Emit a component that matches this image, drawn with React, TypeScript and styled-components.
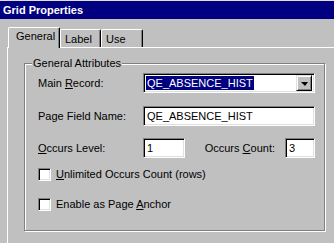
import { FunctionComponent, ReactNode } from "react";
import styled, { createGlobalStyle } from "styled-components";

const GlobalStyle = createGlobalStyle`
  html, body {
    margin: 0;
    padding: 0;
    background: #c0c0c0;
  }
  body {
    font-family: "Liberation Sans", Arial, sans-serif;
    font-size: 11px;
    color: #000;
  }
`;

const Window = styled.div`
  width: 334px;
  height: 243px;
  display: flex;
  flex-direction: column;
  background: #c0c0c0;
  border-top: 1px solid #dfdfdf;
  box-sizing: border-box;
  overflow: hidden;
`;

const TitleBar = styled.div`
  height: 18px;
  line-height: 18px;
  padding-left: 3px;
  background: #000080;
  color: #fff;
  font-weight: bold;
  font-size: 11px;
`;

const TabStrip = styled.div`
  display: flex;
  align-items: flex-end;
  margin: 8px 0 0 8px;
  position: relative;
  z-index: 1;
`;

const Tab = styled.div<{ $active?: boolean; $width: number }>`
  box-sizing: border-box;
  width: ${({ $width }) => $width}px;
  height: ${({ $active }) => ($active ? 21 : 18)}px;
  margin-bottom: ${({ $active }) => ($active ? -1 : 0)}px;
  padding: ${({ $active }) => ($active ? "2px 0 0 7px" : "3px 0 0 4px")};
  background: #c0c0c0;
  border-top: 1px solid #fff;
  border-left: 1px solid #fff;
  border-right: 1px solid #000;
  border-radius: 2px 2px 0 0;
  box-shadow: inset -1px 0 #808080;
  line-height: 13px;
`;

const Panel = styled.div`
  flex: 1;
  margin-left: 7px;
  border-top: 1px solid #fff;
  border-left: 1px solid #fff;
  padding: 15px 0 0 16px;
`;

const GroupBox = styled.div`
  box-sizing: border-box;
  width: 301px;
  height: 168px;
  display: flex;
  flex-direction: column;
  padding-left: 13px;
  border: 1px solid #808080;
  box-shadow: inset 1px 1px #fff, 1px 1px #fff;
`;

const Legend = styled.div`
  align-self: flex-start;
  margin: -7px 0 0 -6px;
  padding: 0 1px;
  line-height: 13px;
  background: #c0c0c0;
`;

const Row = styled.div<{ $gap: number }>`
  width: 277px;
  display: flex;
  align-items: center;
  margin-top: ${({ $gap }) => $gap}px;
`;

const Label = styled.span<{ $width?: number }>`
  width: ${({ $width }) => ($width ? `${$width}px` : "auto")};
  line-height: 13px;
  white-space: nowrap;
`;

const PushedLabel = styled(Label)`
  margin: 0 10px 0 auto;
`;

const Sunken = styled.div<{ $width: number }>`
  box-sizing: border-box;
  width: ${({ $width }) => $width}px;
  height: 20px;
  display: flex;
  align-items: center;
  padding: 0 2px 0 3px;
  background: #fff;
  border-top: 1px solid #808080;
  border-left: 1px solid #808080;
  border-bottom: 1px solid #fff;
  border-right: 1px solid #fff;
  box-shadow: inset 1px 1px #000, inset -1px -1px #dfdfdf;
  line-height: 13px;
  white-space: nowrap;
`;

const SelectBox = styled(Sunken)`
  padding: 0 2px 0 2px;
  justify-content: space-between;
`;

const Selected = styled.span`
  background: #000080;
  color: #fff;
  line-height: 14px;
  padding: 0 1px;
`;

const DropButton = styled.div`
  box-sizing: border-box;
  width: 16px;
  height: 16px;
  display: flex;
  align-items: center;
  justify-content: center;
  background: #c0c0c0;
  border-top: 1px solid #dfdfdf;
  border-left: 1px solid #dfdfdf;
  border-right: 1px solid #000;
  border-bottom: 1px solid #000;
  box-shadow: inset 1px 1px #fff, inset -1px -1px #808080;
`;

const Arrow = styled.div`
  width: 0;
  height: 0;
  border-left: 4px solid transparent;
  border-right: 3px solid transparent;
  border-top: 4px solid #000;
  margin-top: 1px;
`;

const CheckBox = styled.div`
  box-sizing: border-box;
  width: 13px;
  height: 13px;
  background: #fff;
  border-top: 1px solid #808080;
  border-left: 1px solid #808080;
  border-bottom: 1px solid #fff;
  border-right: 1px solid #fff;
  box-shadow: inset 1px 1px #000, inset -1px -1px #dfdfdf;
`;

const CheckLabel = styled.span`
  margin-left: 5px;
  line-height: 13px;
`;

const U = styled.span`
  text-decoration: underline;
  text-underline-offset: 1px;
`;

const CheckRow: FunctionComponent<{ gap: number; children: ReactNode }> = ({
  gap,
  children,
}) => (
  <Row $gap={gap}>
    <CheckBox />
    <CheckLabel>{children}</CheckLabel>
  </Row>
);

const App: FunctionComponent = () => {
  return (
    <>
      <GlobalStyle />
      <Window>
        <TitleBar>Grid Properties</TitleBar>
        <TabStrip>
          <Tab $active $width={52}>General</Tab>
          <Tab $width={41}>Label</Tab>
          <Tab $width={42}>Use</Tab>
        </TabStrip>
        <Panel>
          <GroupBox>
            <Legend>General Attributes</Legend>
            <Row $gap={3}>
              <Label $width={105}>
                Main <U>R</U>ecord:
              </Label>
              <SelectBox $width={172}>
                <Selected>QE_ABSENCE_HIST</Selected>
                <DropButton>
                  <Arrow />
                </DropButton>
              </SelectBox>
            </Row>
            <Row $gap={13}>
              <Label $width={105}>Page Field Name:</Label>
              <Sunken $width={172}>QE_ABSENCE_HIST</Sunken>
            </Row>
            <Row $gap={12}>
              <Label $width={105}>
                <U>O</U>ccurs Level:
              </Label>
              <Sunken $width={42}>1</Sunken>
              <PushedLabel>
                Occurs <U>C</U>ount:
              </PushedLabel>
              <Sunken $width={30}>3</Sunken>
            </Row>
            <CheckRow gap={10}>
              <U>U</U>nlimited Occurs Count (rows)
            </CheckRow>
            <CheckRow gap={17}>
              Enable as Page <U>A</U>nchor
            </CheckRow>
          </GroupBox>
        </Panel>
      </Window>
    </>
  );
};

export default App;
